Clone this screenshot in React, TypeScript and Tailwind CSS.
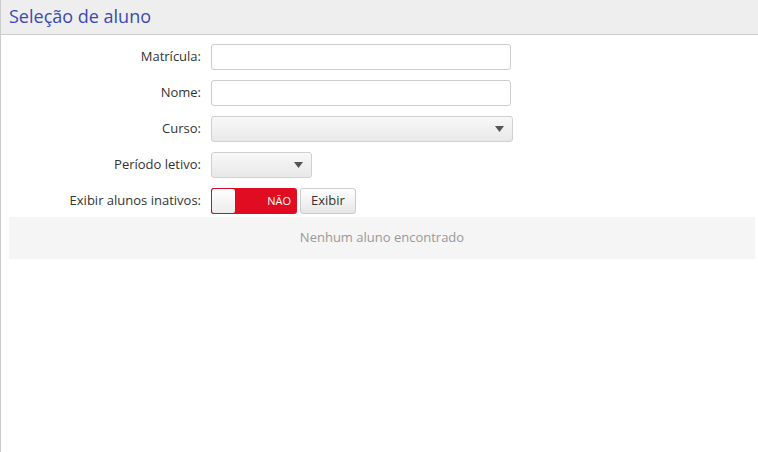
const font = { fontFamily: '"Open Sans", "Noto Sans", sans-serif' };

const Caret = () => (
  <svg width="9" height="6" viewBox="0 0 9 6" className="absolute right-[8px] top-1/2 -translate-y-1/2">
    <path d="M0 0 H9 L4.5 6 Z" fill="#555" />
  </svg>
);

const Row = ({ label, children }: { label: string; children: React.ReactNode }) => (
  <div className="grid grid-cols-[200px_1fr] gap-x-[10px] items-center h-[26px]">
    <label className="text-right text-[13px] text-[#333]">{label}</label>
    <div className="flex items-center gap-[3px]">{children}</div>
  </div>
);

export default function App() {
  return (
    <div className="w-full h-[452px] border-l border-[#ccc] bg-white" style={font}>
      <header className="h-[35px] bg-[#eeeeee] border-b border-[#cccccc] pl-2 flex items-center">
        <h1 className="text-[18px] leading-none text-[#3a4ab4] -mt-[2px]">Seleção de aluno</h1>
      </header>

      <div className="pt-[9px] flex flex-col gap-[10px]">
        <Row label="Matrícula:">
          <input className="w-[300px] h-[26px] border border-[#ccc] rounded-[3px] bg-white outline-none" />
        </Row>
        <Row label="Nome:">
          <input className="w-[300px] h-[26px] border border-[#ccc] rounded-[3px] bg-white outline-none" />
        </Row>
        <Row label="Curso:">
          <div className="relative w-[302px] h-[26px] border border-[#d0d0d0] rounded-[3px] bg-gradient-to-b from-[#f8f8f8] to-[#e8e8e8]">
            <Caret />
          </div>
        </Row>
        <Row label="Período letivo:">
          <div className="relative w-[101px] h-[26px] border border-[#d0d0d0] rounded-[3px] bg-gradient-to-b from-[#f8f8f8] to-[#e8e8e8]">
            <Caret />
          </div>
        </Row>
        <Row label="Exibir alunos inativos:">
          <div className="relative w-[86px] h-[26px] rounded-[3px] bg-[#e10c22] flex items-center justify-end pr-[6px]">
            <div className="absolute left-0 top-0 w-[25px] h-[26px] rounded-[3px] border border-[#c8102a] bg-gradient-to-b from-white to-[#ececec]" />
            <span className="text-[11px] text-white">NÃO</span>
          </div>
          <button className="h-[26px] px-[10px] border border-[#ccc] rounded-[3px] bg-gradient-to-b from-white to-[#e6e6e6] text-[13px] text-[#333]">
            Exibir
          </button>
        </Row>
      </div>

      <div className="mt-[3px] ml-[8px] mr-[3px] h-[42px] bg-[#f5f5f5] flex items-center justify-center">
        <span className="text-[13px] text-[#999]">Nenhum aluno encontrado</span>
      </div>
    </div>
  );
}
